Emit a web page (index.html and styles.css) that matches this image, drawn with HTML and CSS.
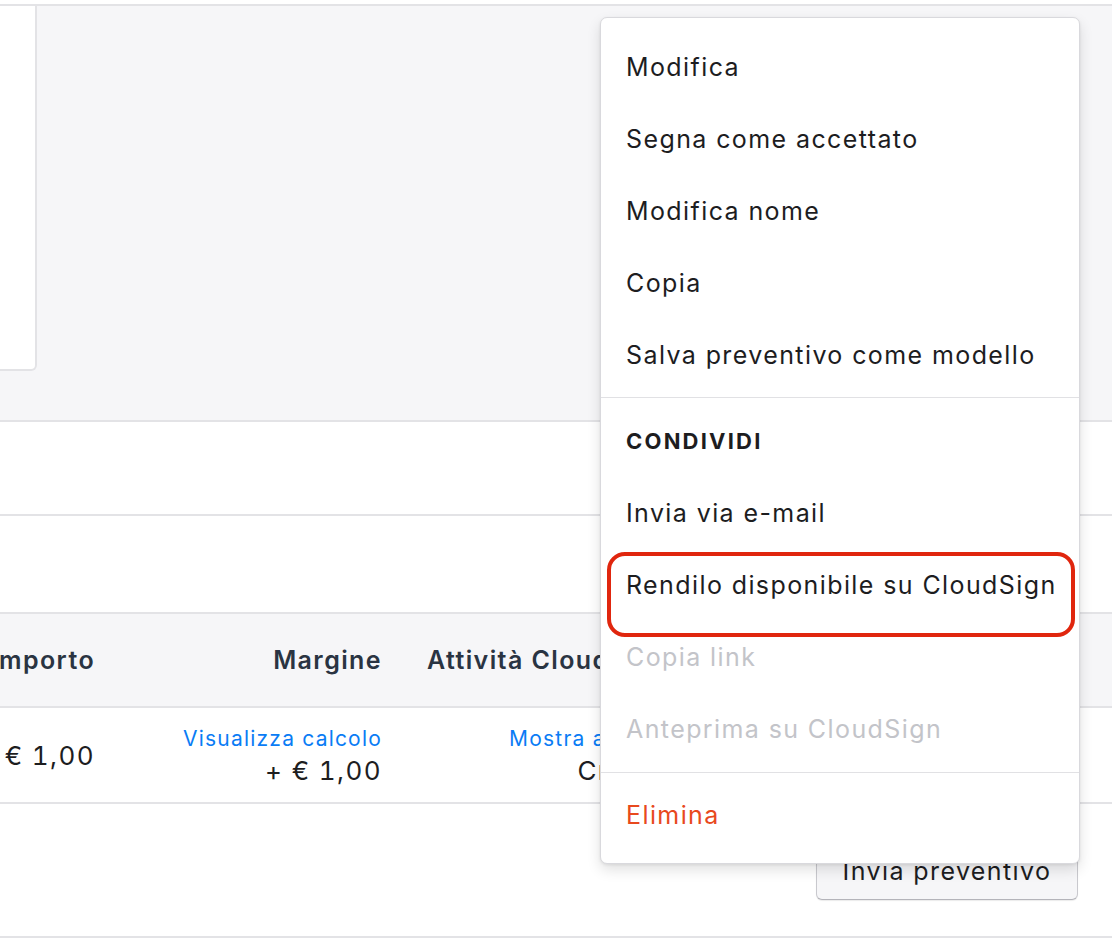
FILE: index.html
```html
<!DOCTYPE html>
<html lang="it">
<head>
<meta charset="utf-8">
<title>Preventivo</title>
<link rel="stylesheet" href="styles.css">
</head>
<body>
<div class="page">
  <div class="topgap"></div>
  <section class="gray-area">
    <div class="left-card"></div>
  </section>
  <section class="band band-1"></section>
  <section class="band band-2"></section>
  <div class="trow thead">
    <div class="cell c1">Importo</div>
    <div class="cell c2">Margine</div>
    <div class="cell c3 head-left">Attività CloudSign</div>
  </div>
  <div class="trow tbody">
    <div class="cell c1 amount">€ 1,00</div>
    <div class="cell c2 stack">
      <a class="link">Visualizza calcolo</a>
      <span class="amount">+ € 1,00</span>
    </div>
    <div class="cell c3 stack">
      <a class="link">Mostra attività</a>
      <span class="amount">Creato</span>
    </div>
  </div>
  <footer class="footer">
    <button class="send-btn">Invia preventivo</button>
  </footer>
</div>

<div class="menu">
  <div class="menu-group">
    <div class="menu-item">Modifica</div>
    <div class="menu-item">Segna come accettato</div>
    <div class="menu-item">Modifica nome</div>
    <div class="menu-item">Copia</div>
    <div class="menu-item">Salva preventivo come modello</div>
  </div>
  <div class="menu-group">
    <div class="menu-heading">CONDIVIDI</div>
    <div class="menu-item">Invia via e-mail</div>
    <div class="menu-item highlighted">Rendilo disponibile su CloudSign<span class="ring"></span></div>
    <div class="menu-item disabled">Copia link</div>
    <div class="menu-item disabled">Anteprima su CloudSign</div>
  </div>
  <div class="menu-group last">
    <div class="menu-item danger">Elimina</div>
  </div>
</div>
</body>
</html>
```

FILE: styles.css
```css
* { box-sizing: border-box; }

html, body {
  margin: 0;
  padding: 0;
  width: 1112px;
  height: 940px;
  overflow: hidden;
  background: #ffffff;
  font-family: Inter, "Noto Sans", "Liberation Sans", sans-serif;
  color: #1d1d1f;
  letter-spacing: 1.4px;
}

.page {
  display: flex;
  flex-direction: column;
  width: 1112px;
}

.topgap { height: 4px; background: #fff; }

.gray-area {
  height: 418px;
  background: #f6f6f8;
  border-top: 2px solid #e3e3e6;
  border-bottom: 2px solid #e3e3e6;
  display: flex;
  align-items: flex-start;
}

.left-card {
  width: 37px;
  height: 365px;
  background: #ffffff;
  border-right: 2px solid #e3e3e6;
  border-bottom: 2px solid #e3e3e6;
  border-bottom-right-radius: 6px;
}

.band {
  background: #fff;
  border-bottom: 2px solid #e3e3e6;
}
.band-1 { height: 94px; }
.band-2 { height: 98px; }

.trow {
  display: flex;
  align-items: center;
  margin-left: -20px;
  border-bottom: 2px solid #e3e3e6;
}

.thead {
  height: 94px;
  background: #f6f6f8;
  font-size: 25px;
  font-weight: 600;
  color: #2a3442;
}

.tbody {
  height: 96px;
  background: #fff;
}

.cell { flex: none; text-align: right; white-space: nowrap; }
.c1 { width: 115px; }
.c2 { width: 287px; }
.c3 { width: 241px; margin-left: 45px; }
.head-left { text-align: left; }

.stack {
  display: flex;
  flex-direction: column;
  align-items: flex-end;
}

.amount {
  font-size: 26px;
  line-height: 33px;
  color: #1d1d1f;
  font-variant-numeric: tabular-nums;
}

.link {
  font-size: 21px;
  line-height: 31px;
  color: #0a7cf5;
  text-decoration: none;
  letter-spacing: 1.2px;
}

.footer {
  height: 134px;
  border-bottom: 2px solid #e3e3e6;
  display: flex;
  justify-content: flex-end;
  align-items: flex-start;
  padding: 41px 34px 0 0;
}

.send-btn {
  height: 55px;
  width: 262px;
  padding: 0 0 4px;
  font-family: inherit;
  font-size: 25px;
  letter-spacing: 1.4px;
  color: #1d1d1f;
  background: #f6f6f8;
  border: 1px solid #c9c9ce;
  border-bottom-color: #b4b4ba;
  border-radius: 6px;
  box-shadow: 0 1px 1px rgba(0,0,0,0.08);
}

/* dropdown menu */
.menu {
  position: absolute;
  left: 600px;
  top: 17px;
  width: 480px;
  background: #fff;
  border: 1px solid #d9d9dd;
  border-radius: 7px;
  box-shadow: 0 6px 14px rgba(0,0,0,0.12), 0 1px 3px rgba(0,0,0,0.08);
  display: flex;
  flex-direction: column;
}

.menu-group {
  padding: 6px 0 7px;
  border-bottom: 1px solid #e1e1e4;
}
.menu-group:first-child { padding: 13px 0 6px; }
.menu-group.last { border-bottom: none; padding: 6px 0 12px; }

.menu-item,
.menu-heading {
  height: 72px;
  display: flex;
  align-items: center;
  padding-left: 25px;
  font-size: 25px;
  color: #1d1d1f;
  white-space: nowrap;
}

.menu-heading {
  height: 73px;
  font-size: 22px;
  font-weight: 700;
  letter-spacing: 2.2px;
  padding-top: 1px;
}

.menu-item.disabled { color: #c3c4c9; }
.menu-item.danger { color: #e8491d; }

.highlighted { position: relative; }
.ring {
  position: absolute;
  left: 6px;
  right: 4px;
  top: 3px;
  bottom: -16px;
  border: 4px solid #e0260e;
  border-radius: 18px;
  pointer-events: none;
}
```
